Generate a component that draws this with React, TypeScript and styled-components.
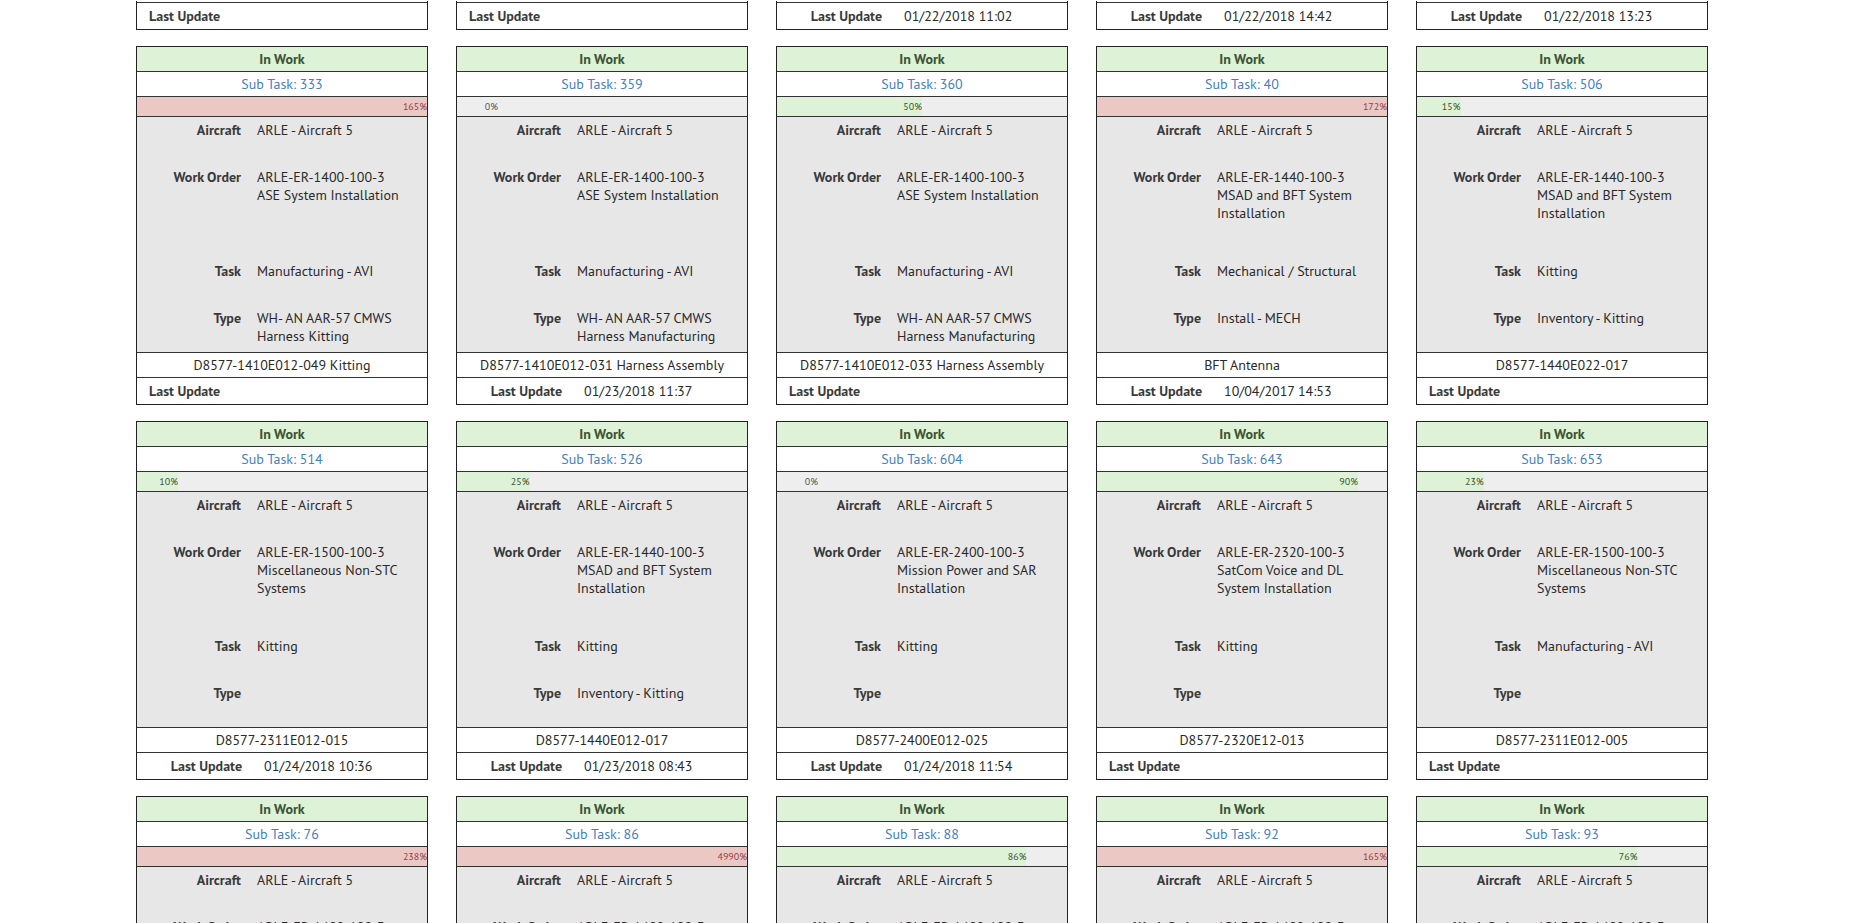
import React from 'react';
import styled, { createGlobalStyle, css } from 'styled-components';

const GlobalStyle = createGlobalStyle`
  * { box-sizing: border-box; }
  body {
    margin: 0;
    background: #fff;
    color: #2a2a2a;
    font: 14px/18px 'PT Sans', Lato, 'Noto Sans', sans-serif;
  }
`;

const Page = styled.main`
  height: 100vh;
  overflow: hidden;
  padding: 1px 142px 0 136px;
`;

const CardGrid = styled.div`
  display: grid;
  grid-template-columns: repeat(5, 1fr);
  gap: 16px 28px;
`;

const Card = styled.article<{ $cut?: boolean }>`
  border: 1px solid #222;
  ${(p) => p.$cut && css`
    border-top: 0;
    padding-top: 1px;
  `}
`;

const Status = styled.h2`
  margin: 0;
  height: 24px;
  background: #ddf2d6;
  color: #3c5235;
  font-size: 14px;
  font-weight: 700;
  line-height: 24px;
  text-align: center;
`;

const TaskLink = styled.a`
  display: block;
  height: 25px;
  border-top: 1px solid #333;
  color: #427fc4;
  line-height: 24px;
  text-align: center;
  text-decoration: none;
`;

const Progress = styled.div`
  height: 20px;
  overflow: hidden;
  border-top: 1px solid #333;
  background: #eee;
`;

const Bar = styled.div<{ $tone: 'ok' | 'over' | 'none' }>`
  min-width: 41px;
  height: 19px;
  background: ${(p) => ({ ok: '#ddf2d6', over: '#ebc8c4', none: 'transparent' })[p.$tone]};
  color: ${(p) => ({ ok: '#3c5235', over: '#94404a', none: '#555' })[p.$tone]};
  font-size: 10px;
  line-height: 19px;
  text-align: right;
`;

const Details = styled.dl`
  display: grid;
  grid-template-columns: 104px 1fr;
  grid-template-rows: 47px 94px 47px 47px;
  column-gap: 16px;
  margin: 0;
  border-top: 1px solid #333;
  background: #e7e7e7;
`;

const Label = styled.dt`
  padding-top: 4px;
  color: #3a3a3a;
  font-weight: 700;
  text-align: right;
`;

const Value = styled.dd`
  margin: 0;
  padding: 4px 15px 0 0;
`;

const Line = styled.span`
  display: block;
`;

const Part = styled.p`
  margin: 0;
  height: 25px;
  border-top: 1px solid #333;
  line-height: 24px;
  text-align: center;
`;

const Updated = styled.footer`
  display: flex;
  gap: 22px;
  height: 27px;
  border-top: 1px solid #333;
  padding-left: 12px;
  line-height: 26px;
`;

const UpdatedLabel = styled.strong<{ $dated: boolean }>`
  width: ${(p) => (p.$dated ? '93px' : 'auto')};
  color: #3a3a3a;
  text-align: right;
`;

type Task = {
  id: number;
  percent: number;
  order: string;
  title: string;
  task: string;
  type: string[];
  part: string;
  updated?: string;
};

const earlier = [undefined, undefined, '01/22/2018 11:02', '01/22/2018 14:42', '01/22/2018 13:23'];

const ASE = 'ASE System Installation';
const MSAD = 'MSAD and BFT System Installation';
const MISC = 'Miscellaneous Non-STC Systems';
const AVI = 'Manufacturing - AVI';
const KIT = ['Inventory - Kitting'];

const tasks: Task[] = [
  { id: 333, percent: 165, order: 'ARLE-ER-1400-100-3', title: ASE, task: AVI, type: ['WH- AN AAR-57 CMWS', 'Harness Kitting'], part: 'D8577-1410E012-049 Kitting' },
  { id: 359, percent: 0, order: 'ARLE-ER-1400-100-3', title: ASE, task: AVI, type: ['WH- AN AAR-57 CMWS', 'Harness Manufacturing'], part: 'D8577-1410E012-031 Harness Assembly', updated: '01/23/2018 11:37' },
  { id: 360, percent: 50, order: 'ARLE-ER-1400-100-3', title: ASE, task: AVI, type: ['WH- AN AAR-57 CMWS', 'Harness Manufacturing'], part: 'D8577-1410E012-033 Harness Assembly' },
  { id: 40, percent: 172, order: 'ARLE-ER-1440-100-3', title: MSAD, task: 'Mechanical / Structural', type: ['Install - MECH'], part: 'BFT Antenna', updated: '10/04/2017 14:53' },
  { id: 506, percent: 15, order: 'ARLE-ER-1440-100-3', title: MSAD, task: 'Kitting', type: KIT, part: 'D8577-1440E022-017' },
  { id: 514, percent: 10, order: 'ARLE-ER-1500-100-3', title: MISC, task: 'Kitting', type: [], part: 'D8577-2311E012-015', updated: '01/24/2018 10:36' },
  { id: 526, percent: 25, order: 'ARLE-ER-1440-100-3', title: MSAD, task: 'Kitting', type: KIT, part: 'D8577-1440E012-017', updated: '01/23/2018 08:43' },
  { id: 604, percent: 0, order: 'ARLE-ER-2400-100-3', title: 'Mission Power and SAR Installation', task: 'Kitting', type: [], part: 'D8577-2400E012-025', updated: '01/24/2018 11:54' },
  { id: 643, percent: 90, order: 'ARLE-ER-2320-100-3', title: 'SatCom Voice and DL System Installation', task: 'Kitting', type: [], part: 'D8577-2320E12-013' },
  { id: 653, percent: 23, order: 'ARLE-ER-1500-100-3', title: MISC, task: AVI, type: [], part: 'D8577-2311E012-005' },
  ...[[76, 238], [86, 4990], [88, 86], [92, 165], [93, 76]].map(([id, percent]) => ({
    id, percent, order: 'ARLE-ER-1400-100-3', title: '', task: '', type: [], part: '',
  })),
];

function LastUpdate({ date }: { date?: string }) {
  return (
    <Updated>
      <UpdatedLabel $dated={!!date}>Last Update</UpdatedLabel>
      {date && <time>{date}</time>}
    </Updated>
  );
}

function TaskCard({ task: t }: { task: Task }) {
  const tone = t.percent > 100 ? 'over' : t.percent > 0 ? 'ok' : 'none';
  return (
    <Card>
      <Status>In Work</Status>
      <TaskLink href={`#task-${t.id}`}>Sub Task: {t.id}</TaskLink>
      <Progress>
        <Bar $tone={tone} style={{ width: `${Math.min(t.percent, 100)}%` }}>{t.percent}%</Bar>
      </Progress>
      <Details>
        <Label>Aircraft</Label>
        <Value>ARLE - Aircraft 5</Value>
        <Label>Work Order</Label>
        <Value><Line>{t.order}</Line><Line>{t.title}</Line></Value>
        <Label>Task</Label>
        <Value>{t.task}</Value>
        <Label>Type</Label>
        <Value>{t.type.map((line) => <Line key={line}>{line}</Line>)}</Value>
      </Details>
      <Part>{t.part}</Part>
      <LastUpdate date={t.updated} />
    </Card>
  );
}

export default function App() {
  return (
    <>
      <GlobalStyle />
      <Page>
        <CardGrid>
          {earlier.map((date, i) => <Card $cut key={i}><LastUpdate date={date} /></Card>)}
          {tasks.map((t) => <TaskCard key={t.id} task={t} />)}
        </CardGrid>
      </Page>
    </>
  );
}
